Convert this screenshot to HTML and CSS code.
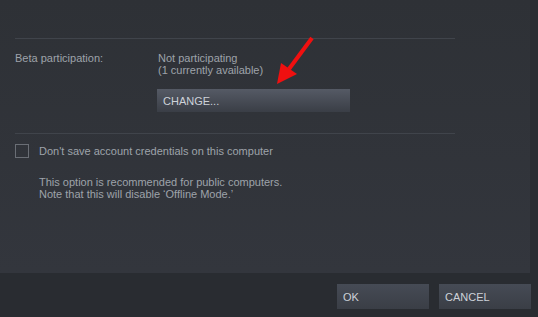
FILE: index.html
```html
<!DOCTYPE html>
<html lang="en">

<head>
    <meta charset="UTF-8">
    <title>Settings - Account</title>
    <link rel="stylesheet" href="styles.css">
</head>

<body>
    <div class="dialog">
        <div class="panel">
            <div class="divider"></div>

            <div class="setting-row">
                <div class="setting-label">Beta participation:</div>
                <div class="setting-value">
                    <div>Not participating</div>
                    <div>(1 currently available)</div>
                    <button class="btn btn-change">CHANGE...</button>
                </div>
            </div>

            <div class="divider divider-low"></div>

            <label class="check-row">
                <span class="checkbox"></span>
                <span>Don't save account credentials on this computer</span>
            </label>
            <p class="note">This option is recommended for public computers.<br>Note that this will disable ‘Offline Mode.’</p>

            <!-- annotation arrow -->
            <svg class="arrow" width="50" height="56" viewBox="0 0 50 56">
                <line x1="42" y1="2" x2="19" y2="33" stroke="#f01010" stroke-width="4" />
                <polygon points="7,48 11,27 27,38" fill="#f01010" />
            </svg>
        </div>

        <div class="footer">
            <button class="btn btn-footer">OK</button>
            <button class="btn btn-footer">CANCEL</button>
        </div>
    </div>
</body>

</html>
```

FILE: styles.css
```css
* {
    box-sizing: border-box;
}

body {
    margin: 0;
    font-family: 'Liberation Sans', Arial, sans-serif;
    font-size: 11px;
    line-height: 12px;
    color: #9ea3aa;
    background: #292c31;
}

.dialog {
    width: 538px;
    height: 317px;
    display: flex;
    flex-direction: column;
}

.panel {
    position: relative;
    width: 530px;
    height: 273px;
    padding: 38px 75px 0 15px;
    background: linear-gradient(180deg, #2e3136 0%, #33363d 100%);
}

.divider {
    height: 1px;
    background: #40444b;
}

.divider-low {
    margin-top: 21px;
}

.setting-row {
    display: flex;
    margin-top: 13px;
}

.setting-label {
    width: 143px;
}

.setting-value {
    display: flex;
    flex-direction: column;
    align-items: flex-start;
}

.btn {
    font-family: 'Liberation Sans', Arial, sans-serif;
    font-size: 11px;
    color: #cdd2d9;
    text-align: left;
    border: none;
    padding: 0 6px;
    cursor: pointer;
}

.btn-change {
    width: 193px;
    height: 23px;
    margin-top: 13px;
    margin-left: -1px;
    background: linear-gradient(180deg, #555a65 0%, #3a3e46 100%);
}

.check-row {
    display: flex;
    align-items: center;
    gap: 10px;
    margin-top: 10px;
}

.checkbox {
    width: 14px;
    height: 14px;
    border: 1px solid #6a6e75;
}

.note {
    margin: 18px 0 0 24px;
}

.arrow {
    position: absolute;
    left: 270px;
    top: 36px;
}

.footer {
    flex: 1;
    display: flex;
    justify-content: flex-end;
    align-items: flex-start;
    gap: 10px;
    padding: 11px 7px 0 0;
}

.btn-footer {
    width: 92px;
    height: 25px;
    background: linear-gradient(180deg, #464b55 0%, #3a3e46 100%);
}
```
